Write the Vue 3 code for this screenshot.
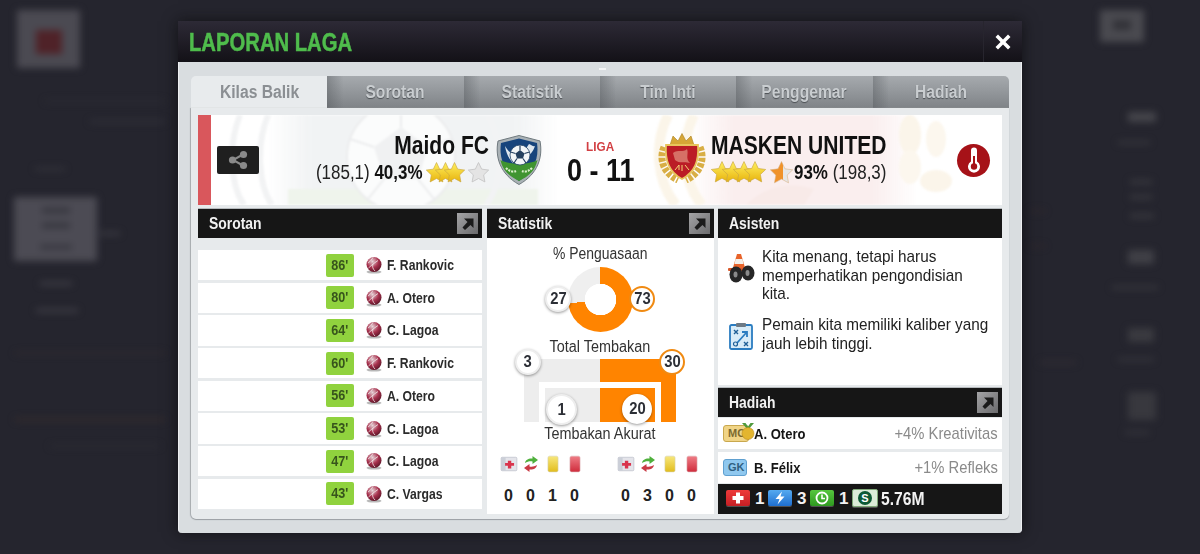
<script setup>
const blobs = [
  { x: 17, y: 10, w: 63, h: 58, c: '#4b4a52' },
  { x: 36, y: 30, w: 26, h: 24, c: '#4f2228' },
  { x: 14, y: 197, w: 83, h: 64, c: '#4c4b54' },
  { x: 42, y: 208, w: 28, h: 5, c: '#34343c' },
  { x: 42, y: 223, w: 28, h: 5, c: '#34343c' },
  { x: 40, y: 245, w: 32, h: 4, c: '#34343c' },
  { x: 40, y: 282, w: 32, h: 3, c: '#44434b' },
  { x: 36, y: 309, w: 42, h: 3, c: '#44434b' },
  { x: 100, y: 232, w: 20, h: 3, c: '#3f3e46' },
  { x: 35, y: 168, w: 30, h: 2, c: '#3c3c44' },
  { x: 45, y: 100, w: 120, h: 2, c: '#2f2f37' },
  { x: 90, y: 120, w: 75, h: 3, c: '#31313a' },
  { x: 15, y: 352, w: 150, h: 2, c: '#342c30' },
  { x: 15, y: 418, w: 150, h: 3, c: '#362c2c' },
  { x: 50, y: 445, w: 110, h: 2, c: '#2e2e36' },
  { x: 1100, y: 10, w: 44, h: 32, c: '#4a4a50' },
  { x: 1113, y: 20, w: 18, h: 10, c: '#323238' },
  { x: 1128, y: 112, w: 28, h: 10, c: '#45454b' },
  { x: 1118, y: 141, w: 32, h: 3, c: '#3a3a40' },
  { x: 1130, y: 180, w: 22, h: 4, c: '#3a3a40' },
  { x: 1130, y: 195, w: 22, h: 4, c: '#3a3a40' },
  { x: 1130, y: 214, w: 24, h: 4, c: '#3a3a40' },
  { x: 1128, y: 250, w: 26, h: 14, c: '#404046' },
  { x: 1112, y: 286, w: 46, h: 3, c: '#3a3a40' },
  { x: 1128, y: 328, w: 26, h: 14, c: '#3a3a40' },
  { x: 1118, y: 358, w: 36, h: 3, c: '#38383e' },
  { x: 1128, y: 392, w: 28, h: 28, c: '#38383e' },
  { x: 1125, y: 431, w: 24, h: 3, c: '#38383e' },
  { x: 1040, y: 361, w: 36, h: 3, c: '#322d34' },
  { x: 1030, y: 210, w: 15, h: 2, c: '#34292d' },
  { x: 1030, y: 245, w: 15, h: 2, c: '#34292d' }
]

const tabs = ['Kilas Balik', 'Sorotan', 'Statistik', 'Tim Inti', 'Penggemar', 'Hadiah']

const goals = [
  { min: 86, name: 'F. Rankovic' },
  { min: 80, name: 'A. Otero' },
  { min: 64, name: 'C. Lagoa' },
  { min: 60, name: 'F. Rankovic' },
  { min: 56, name: 'A. Otero' },
  { min: 53, name: 'C. Lagoa' },
  { min: 47, name: 'C. Lagoa' },
  { min: 43, name: 'C. Vargas' }
]

const discipline = ['#i-med', '#i-sub', '#i-yellow', '#i-red']
const homeCounts = [0, 0, 1, 0]
const awayCounts = [0, 3, 0, 0]
</script>

<template>
  <div class="page">
    <svg class="defs" width="0" height="0">
      <defs>
        <linearGradient id="gold" x1="0" y1="0" x2="0" y2="1">
          <stop offset="0" stop-color="#fff060" />
          <stop offset="1" stop-color="#e8b30c" />
        </linearGradient>
        <linearGradient id="half" x1="0" y1="0" x2="1" y2="0">
          <stop offset="0.55" stop-color="#f0922a" />
          <stop offset="0.55" stop-color="#e6e6e6" />
        </linearGradient>
        <radialGradient id="ballG" cx="0.4" cy="0.3" r="0.8">
          <stop offset="0" stop-color="#e6d4d8" />
          <stop offset="0.5" stop-color="#a8324e" />
          <stop offset="1" stop-color="#4a0e1e" />
        </radialGradient>
        <linearGradient id="redCard" x1="0" y1="0" x2="0" y2="1">
          <stop offset="0" stop-color="#ef7d86" />
          <stop offset="1" stop-color="#cf2c3c" />
        </linearGradient>
        <linearGradient id="yellowCard" x1="0" y1="0" x2="0" y2="1">
          <stop offset="0" stop-color="#f7e77c" />
          <stop offset="1" stop-color="#e2bd1d" />
        </linearGradient>
        <linearGradient id="greyZone" x1="0" y1="0" x2="1" y2="0">
          <stop offset="0" stop-color="#f1f3f4" stop-opacity="0" />
          <stop offset="0.15" stop-color="#f1f3f4" />
          <stop offset="0.85" stop-color="#f1f3f4" />
          <stop offset="1" stop-color="#f1f3f4" stop-opacity="0" />
        </linearGradient>
        <linearGradient id="pinkZone" x1="0" y1="0" x2="1" y2="0">
          <stop offset="0" stop-color="#faeeee" stop-opacity="0" />
          <stop offset="0.2" stop-color="#faeeee" />
          <stop offset="0.8" stop-color="#faeeee" />
          <stop offset="1" stop-color="#faeeee" stop-opacity="0" />
        </linearGradient>
      </defs>
      <symbol id="i-star" viewBox="0 0 20 20">
        <polygon points="10,0.500 13,6.800 19.700,7.700 14.900,12.300 16.100,19 10,15.700 3.900,19 5.100,12.300 0.300,7.700 7,6.800" fill="url(#gold)" stroke="#c9a640" stroke-width="0.6" />
      </symbol>
      <symbol id="i-star-off" viewBox="0 0 20 20">
        <polygon points="10,0.500 13,6.800 19.700,7.700 14.900,12.300 16.100,19 10,15.700 3.900,19 5.100,12.300 0.300,7.700 7,6.800" fill="#e4e4e4" stroke="#c4c4c4" stroke-width="0.8" />
      </symbol>
      <symbol id="i-star-half" viewBox="0 0 20 20">
        <polygon points="10,0.500 13,6.800 19.700,7.700 14.900,12.300 16.100,19 10,15.700 3.900,19 5.100,12.300 0.300,7.700 7,6.800" fill="url(#half)" stroke="#d5b083" stroke-width="0.5" />
      </symbol>
      <symbol id="i-ball" viewBox="0 0 18 18">
        <ellipse cx="9" cy="16" rx="7.500" ry="1.600" fill="#888" opacity="0.6" />
        <circle cx="9" cy="8.500" r="7.500" fill="url(#ballG)" />
        <path d="M3 7 C6 5 7 3 8 1.500 M8 8 L13 4.500 M8 8 C7 11 8 13 10 15 M8 8 L3.500 12" stroke="#f3e8ea" stroke-width="0.8" fill="none" />
      </symbol>
      <symbol id="i-med" viewBox="0 0 16 16">
        <rect x="1" y="2" width="14" height="12" rx="1" fill="#e4e4ea" stroke="#b8bcc6" stroke-width="0.6" />
        <rect x="1" y="2" width="4" height="12" fill="#cbcfd8" />
        <path d="M7 5h3v2h2.500v2.500h-2.500v2.500h-3v-2.500h-2.500v-2.500h2.500z" fill="#d9344d" />
      </symbol>
      <symbol id="i-sub" viewBox="0 0 18 18">
        <path d="M3 8 C3.500 4.500 7 3 10.500 3.500 V1 L16 5 L10.500 9 V6.500 C8 6 5.500 6.500 3 8Z" fill="#4fb03c" />
        <path d="M15 10 C14.500 13.500 11 15 7.500 14.500 V17 L2 13 L7.500 9 V11.500 C10 12 12.500 11.500 15 10Z" fill="#c93a45" />
      </symbol>
      <symbol id="i-yellow" viewBox="0 0 16 16">
        <rect x="3.500" y="1" width="9" height="14" rx="1.500" fill="url(#yellowCard)" stroke="#d5d0b0" stroke-width="0.5" />
      </symbol>
      <symbol id="i-red" viewBox="0 0 16 16">
        <rect x="3.500" y="1" width="9" height="14" rx="1.500" fill="url(#redCard)" stroke="#d9b0b4" stroke-width="0.5" />
      </symbol>
    </svg>

    <div class="backdrop">
      <div
        v-for="(b, i) in blobs"
        :key="i"
        class="blob"
        :style="{ left: b.x + 'px', top: b.y + 'px', width: b.w + 'px', height: b.h + 'px', background: b.c }"
      ></div>
    </div>

    <div class="modal">
      <header class="modal-head">
        <h1 class="title"><span class="cond title-text">LAPORAN LAGA</span></h1>
        <button class="close">
          <svg width="18" height="18" viewBox="0 0 18 18">
            <path d="M4 1.500 L9 6.500 L14 1.500 L16.500 4 L11.500 9 L16.500 14 L14 16.500 L9 11.500 L4 16.500 L1.500 14 L6.500 9 L1.500 4 Z" fill="#fff" />
          </svg>
        </button>
      </header>

      <div class="modal-body">
        <i class="speck"></i>
        <nav class="tabs">
          <div v-for="(t, i) in tabs" :key="t" class="tab" :class="{ active: i === 0 }">
            <span class="cond mid">{{ t }}</span>
          </div>
        </nav>

        <div class="panel">
          <section class="banner">
            <svg class="watermark" width="804" height="90" viewBox="0 0 804 90">
              <rect x="70" y="0" width="290" height="90" fill="url(#greyZone)" />
              <rect x="90" y="74" width="250" height="16" fill="#eff4ec" />
              <circle cx="203" cy="42" r="54" fill="#fbfcfc" stroke="#ecedee" stroke-width="2" />
              <path d="M203 12 L230 32 L220 64 L186 64 L176 32 Z" fill="#f0f1f2" />
              <path d="M203 12 V-12 M230 32 L254 24 M220 64 L236 84 M186 64 L170 84 M176 32 L152 24" stroke="#ecedee" stroke-width="2" />
              <path d="M42 0 C30 30 32 70 46 90 M70 0 C58 30 60 70 74 90 M290 0 C306 30 304 70 288 90" stroke="#f2f3f4" stroke-width="6" fill="none" />
              <rect x="490" y="0" width="230" height="90" fill="url(#pinkZone)" />
              <path d="M470 0 C456 28 458 66 478 90 M496 0 C482 28 484 66 504 90" stroke="#fbf5e9" stroke-width="10" fill="none" />
              <ellipse cx="712" cy="20" rx="11" ry="20" fill="#fbf5ea" />
              <ellipse cx="738" cy="24" rx="10" ry="18" fill="#fcf7ee" />
              <ellipse cx="712" cy="52" rx="11" ry="17" fill="#fcf7ee" />
              <ellipse cx="738" cy="66" rx="16" ry="11" fill="#fbf5ea" />
              <path d="M548 90 C566 72 590 66 616 74 L606 90 Z" fill="#f8eae8" />
            </svg>
            <div class="bar"></div>
            <button class="share">
              <svg width="22" height="20" viewBox="0 0 22 20">
                <path d="M16 4.500 L6 10 L16 15.500" stroke="#8a8a8a" stroke-width="2" fill="none" />
                <circle cx="16.500" cy="4.500" r="3.600" fill="#8a8a8a" />
                <circle cx="5.500" cy="10" r="3.600" fill="#8a8a8a" />
                <circle cx="16.500" cy="15.500" r="3.600" fill="#8a8a8a" />
              </svg>
            </button>

            <div class="team home">
              <div class="team-name"><span class="cond end">Maido FC</span></div>
              <div class="team-meta">
                <span class="cond end"><span class="thin">(185,1)</span> 40,3%</span>
                <span class="stars">
                  <svg v-for="n in 3" :key="n"><use href="#i-star" /></svg>
                  <svg class="last"><use href="#i-star-off" /></svg>
                </span>
              </div>
            </div>

            <svg class="crest" width="48" height="50" viewBox="0 0 48 50">
              <path d="M24 0.500 L45 6 C48 22 43 39 24 49.500 C5 39 0 22 3 6 Z" fill="#aab2b6" stroke="#6f797e" stroke-width="1" />
              <path d="M24 3.500 L42 8 C44 22 40 36 24 46 C8 36 4 22 6 8 Z" fill="#17447c" />
              <path d="M5.400 25 C14 30 34 30 42.500 25 C40 36 34 41 24 46 C14 41 8 36 5.400 25 Z" fill="#3f9430" />
              <path d="M10 11 C14 18 18 20 20 18 L18 28 C14 24 11 18 10 11 Z M34 9 C37 10 38 12 40 11 C38 17 35 20 31 22 L30 15 Z" fill="#dfe7ee" />
              <circle cx="25" cy="20" r="10" fill="#f3f6f8" stroke="#27466a" stroke-width="0.8" />
              <path d="M25 15 L29.500 18.500 L28 23.500 L22 23.500 L20.500 18.500 Z" fill="#25405f" />
              <path d="M25 15 V10.500 M29.500 18.500 L34.500 17 M28 23.500 L31 28 M22 23.500 L19 28 M20.500 18.500 L15.500 17" stroke="#25405f" stroke-width="1.200" />
              <path d="M11 33 C15 37 19 37 21 36 M37 33 C33 37 29 37 27 36" stroke="#d9efc9" stroke-width="2.200" fill="none" stroke-dasharray="2 1" />
            </svg>

            <div class="score">
              <span class="league"><span class="cond mid">LIGA</span></span>
              <span class="goals"><span class="cond mid">0 - 11</span></span>
            </div>

            <svg class="crest away-crest" width="48" height="50" viewBox="0 0 48 50">
              <path d="M6 14 C1 26 5 40 20 47 M42 14 C47 26 43 40 28 47" stroke="#d8ae45" stroke-width="7" fill="none" stroke-dasharray="4 1.500" />
              <path d="M12 12 L15 3 L20 8 L24 0.500 L28 8 L33 3 L36 12 Z" fill="#d6a636" stroke="#a97f20" stroke-width="0.6" />
              <path d="M8 12 L40 12 C41 28 37 39 24 46 C11 39 7 28 8 12 Z" fill="#bb1c26" stroke="#e8c45c" stroke-width="1.800" />
              <path d="M15 20 C20 16 25 20 29 16 C31 21 27 25 32 30 C26 28 22 31 17 27 Z" fill="#df8c7c" opacity="0.75" />
              <path d="M17 37 L21 32 L21 37 M24 32 L24 38 M27 32 L31 37" stroke="#f3d576" stroke-width="1" fill="none" />
            </svg>

            <div class="team away">
              <div class="team-name"><span class="cond">MASKEN UNITED</span></div>
              <div class="team-meta">
                <span class="stars">
                  <svg v-for="n in 4" :key="n"><use href="#i-star" /></svg>
                  <svg class="last half"><use href="#i-star-half" /></svg>
                </span>
                <span class="cond">93% <span class="thin">(198,3)</span></span>
              </div>
            </div>

            <div class="thermo">
              <svg width="16" height="26" viewBox="0 0 16 26">
                <path d="M5 3.500 a3 3 0 0 1 6 0 V14.500 a6 6 0 1 1 -6 0 Z" fill="#fff" />
                <circle cx="8" cy="19.500" r="3.200" fill="#a61218" />
                <rect x="7" y="9" width="2" height="9" fill="#a61218" />
              </svg>
            </div>
          </section>

          <div class="columns">
            <section class="col highlights">
              <header class="sec-head">
                <span class="cond">Sorotan</span>
                <span class="expand">
                  <svg width="14" height="14" viewBox="0 0 14 14"><path d="M3 1.500 H12.500 V11 L9.500 8 L4 13 L1.500 10.500 L6.500 5 Z" fill="#1b1b1b" /></svg>
                </span>
              </header>
              <div class="goal-list">
                <div v-for="g in goals" :key="g.min" class="goal">
                  <span class="minute"><span class="cond mid">{{ g.min }}'</span></span>
                  <svg class="ball" width="18" height="18"><use href="#i-ball" /></svg>
                  <span class="scorer"><span class="cond">{{ g.name }}</span></span>
                </div>
              </div>
            </section>

            <section class="col stats">
              <header class="sec-head">
                <span class="cond">Statistik</span>
                <span class="expand">
                  <svg width="14" height="14" viewBox="0 0 14 14"><path d="M3 1.500 H12.500 V11 L9.500 8 L4 13 L1.500 10.500 L6.500 5 Z" fill="#1b1b1b" /></svg>
                </span>
              </header>
              <div class="stat-body">
                <div class="stat-label first"><span class="cond mid">% Penguasaan</span></div>
                <div class="donut-wrap">
                  <div class="donut"></div>
                  <span class="num grey n27"><span class="cond mid">27</span></span>
                  <span class="num orange n73"><span class="cond mid">73</span></span>
                </div>
                <div class="stat-label second"><span class="cond mid">Total Tembakan</span></div>
                <div class="shots">
                  <div class="shots-inner"><div class="shots-acc"></div></div>
                  <span class="num grey n3"><span class="cond mid">3</span></span>
                  <span class="num orange n30"><span class="cond mid">30</span></span>
                  <span class="num grey big n1"><span class="cond mid">1</span></span>
                  <span class="num white n20"><span class="cond mid">20</span></span>
                </div>
                <div class="stat-label third"><span class="cond mid">Tembakan Akurat</span></div>
                <div class="discipline">
                  <div class="disc-side">
                    <div v-for="(d, i) in discipline" :key="d" class="disc-cell">
                      <svg width="18" height="18"><use :href="d" /></svg>
                      <b>{{ homeCounts[i] }}</b>
                    </div>
                  </div>
                  <div class="disc-side">
                    <div v-for="(d, i) in discipline" :key="d" class="disc-cell">
                      <svg width="18" height="18"><use :href="d" /></svg>
                      <b>{{ awayCounts[i] }}</b>
                    </div>
                  </div>
                </div>
              </div>
            </section>

            <section class="col side">
              <header class="sec-head"><span class="cond">Asisten</span></header>
              <div class="advice">
                <div class="tip">
                  <svg width="28" height="30" viewBox="0 0 28 30">
                    <path d="M10 1 L14 1 L19 18 L5 18 Z" fill="#e8632a" />
                    <path d="M8.500 6 L15.500 6 L16.500 11 L7.500 11 Z" fill="#f3f0ea" />
                    <rect x="1" y="15" width="20" height="3" rx="1" fill="#d9592a" />
                    <ellipse cx="9" cy="21.500" rx="6.500" ry="8" fill="#262626" />
                    <ellipse cx="21" cy="20" rx="6.500" ry="7.500" fill="#262626" />
                    <ellipse cx="8.500" cy="21.500" rx="2" ry="3" fill="#8a8a8a" />
                    <ellipse cx="20.500" cy="20" rx="2" ry="3" fill="#8a8a8a" />
                  </svg>
                  <p><span class="cond">Kita menang, tetapi harus<br>memperhatikan pengondisian<br>kita.</span></p>
                </div>
                <div class="tip">
                  <svg width="24" height="28" viewBox="0 0 24 28">
                    <rect x="1" y="3" width="22" height="24" rx="1.500" fill="#d8ecf8" stroke="#2a7cc0" stroke-width="1.800" />
                    <rect x="7" y="1" width="10" height="4" rx="1" fill="#6d7a85" />
                    <path d="M5 8 L9 12 M9 8 L5 12 M15 20 L19 24 M19 20 L15 24" stroke="#1f5f96" stroke-width="1.400" />
                    <path d="M8 21 L17 11 M13 10 H18 V15" stroke="#2a7cc0" stroke-width="1.800" fill="none" />
                    <circle cx="6.500" cy="22" r="2" fill="none" stroke="#1f5f96" stroke-width="1.200" />
                  </svg>
                  <p><span class="cond">Pemain kita memiliki kaliber yang<br>jauh lebih tinggi.</span></p>
                </div>
              </div>

              <header class="sec-head rewards-head">
                <span class="cond">Hadiah</span>
                <span class="expand">
                  <svg width="14" height="14" viewBox="0 0 14 14"><path d="M3 1.500 H12.500 V11 L9.500 8 L4 13 L1.500 10.500 L6.500 5 Z" fill="#1b1b1b" /></svg>
                </span>
              </header>
              <div class="reward">
                <span class="pos mc">MC
                  <svg class="medal" width="14" height="17" viewBox="0 0 14 17">
                    <path d="M1 0 L7 7 L13 0 L9.500 0 L7 3.500 L4.500 0 Z" fill="#4f9a3c" />
                    <circle cx="7" cy="10.500" r="6" fill="#e3b52f" stroke="#b98c1c" stroke-width="0.6" />
                  </svg>
                </span>
                <span class="who"><span class="cond">A. Otero</span></span>
                <span class="bonus"><span class="cond end">+4% Kreativitas</span></span>
              </div>
              <div class="reward">
                <span class="pos gk">GK</span>
                <span class="who"><span class="cond">B. Félix</span></span>
                <span class="bonus"><span class="cond end">+1% Refleks</span></span>
              </div>
              <div class="loot">
                <span class="tile red">
                  <svg width="14" height="14" viewBox="0 0 14 14"><path d="M5 1.500 H9 V5 H12.500 V9 H9 V12.500 H5 V9 H1.500 V5 H5 Z" fill="#fff" /></svg>
                </span>
                <b>1</b>
                <span class="tile blue">
                  <svg width="14" height="14" viewBox="0 0 14 14"><path d="M9 0.500 L2.500 8 H6.500 L4.500 13.500 L11.500 5.500 H7.500 Z" fill="#fff" /></svg>
                </span>
                <b>3</b>
                <span class="tile green">
                  <svg width="14" height="14" viewBox="0 0 14 14"><circle cx="7" cy="7" r="5.500" fill="none" stroke="#fff" stroke-width="1.800" /><path d="M7 3.500 V7.500 H10" stroke="#fff" stroke-width="1.600" fill="none" /></svg>
                </span>
                <b>1</b>
                <span class="tile cash">
                  <svg width="16" height="16" viewBox="0 0 16 16"><circle cx="8" cy="8" r="7" fill="#0d5a35" /><text x="8" y="12" text-anchor="middle" font-size="11" font-weight="700" font-family="Liberation Sans, sans-serif" fill="#fff">S</text></svg>
                </span>
                <b class="money"><span class="cond">5.76M</span></b>
              </div>
            </section>
          </div>
        </div>
      </div>
    </div>
  </div>
</template>

<style>
html,
body {
  margin: 0;
  background: #24242c;
}
</style>

<style scoped>
.page {
  position: relative;
  width: 1200px;
  height: 554px;
  overflow: hidden;
  display: flex;
  justify-content: center;
  padding-top: 21px;
  box-sizing: border-box;
  font-family: "Liberation Sans", Arial, sans-serif;
  color: #111;
  background: #25252e;
}

.defs {
  position: absolute;
}

.backdrop {
  position: absolute;
  inset: 0;
  filter: blur(3.500px);
}

.blob {
  position: absolute;
}

/* narrow helvetica look */
.cond {
  display: inline-block;
  white-space: nowrap;
  transform: scaleX(0.87);
  transform-origin: left center;
}

.cond.end {
  transform-origin: right center;
}

.cond.mid {
  transform-origin: center center;
}

.modal {
  position: relative;
  width: 844px;
  height: 511px;
  display: flex;
  flex-direction: column;
  box-shadow: 0 0 14px rgba(10, 10, 12, 0.7);
}

.modal-head {
  height: 41px;
  flex: none;
  display: flex;
  justify-content: space-between;
  background: linear-gradient(#2d2a36, #131117);
}

.title {
  margin: 0;
  padding: 1px 0 0 11px;
  font-size: 25px;
  line-height: 41px;
  font-weight: 700;
  color: #4fbc4c;
}

.title-text {
  transform: scaleX(0.81);
  -webkit-text-stroke: 0.5px #4fbc4c;
}

.close {
  width: 39px;
  padding: 0;
  border: 0;
  border-left: 1px solid #27252e;
  background: transparent;
  display: flex;
  align-items: center;
  justify-content: center;
}

.modal-body {
  position: relative;
  flex: 1;
  padding: 14px 12px;
  background: #d9dde0;
  border-left: 1px solid #eef0f2;
  border-right: 1px solid #eef0f2;
  border-radius: 0 0 4px 4px;
  box-sizing: border-box;
  display: flex;
  flex-direction: column;
}

.speck {
  position: absolute;
  left: 420px;
  top: 6px;
  width: 7px;
  height: 2px;
  background: #f4f5f6;
}

.tabs {
  display: grid;
  grid-template-columns: repeat(6, 1fr);
  height: 32px;
  flex: none;
}

.tab {
  display: flex;
  align-items: center;
  justify-content: center;
  font-size: 18px;
  font-weight: 700;
  color: #c9cdd0;
  text-shadow: 0 1px 1px #4c5054;
  background: linear-gradient(90deg, rgba(70, 74, 78, 0.35), rgba(70, 74, 78, 0) 12%), linear-gradient(#a6aaae, #7f8387);
}

.tab:first-child {
  border-radius: 5px 0 0 0;
}

.tab:last-child {
  border-radius: 0 5px 0 0;
}

.tab.active {
  color: #8b8f93;
  text-shadow: none;
  background: #e8ebed;
}

.panel {
  flex: 1;
  padding: 7px 7px 5px;
  background: #e7eaec;
  border-radius: 0 0 5px 5px;
  box-shadow: 0 1px 1px #9a9ea2, -1px 0 1px #a8acb0;
  display: flex;
  flex-direction: column;
  gap: 4px;
}

.banner {
  position: relative;
  height: 90px;
  flex: none;
  display: flex;
  align-items: center;
  background: #fff;
  overflow: hidden;
}

.watermark {
  position: absolute;
  left: 0;
  top: 0;
  filter: blur(1px);
}

.bar {
  position: relative;
  width: 13px;
  align-self: stretch;
  background: #d9575c;
}

.share {
  position: relative;
  width: 42px;
  height: 28px;
  margin-left: 6px;
  padding: 0;
  border: 0;
  border-radius: 2px;
  background: #1f1f1f;
  display: flex;
  align-items: center;
  justify-content: center;
}

.team {
  position: relative;
  display: flex;
  flex-direction: column;
  margin-bottom: 4px;
}

.team.home {
  width: 230px;
  margin-right: 6px;
  align-items: flex-end;
}

.team.away {
  width: 246px;
  margin-left: 5px;
}

.team-name {
  font-size: 26px;
  font-weight: 700;
  line-height: 28px;
}

.team-name .cond {
  transform: scaleX(0.81);
}

.team-meta {
  display: flex;
  align-items: center;
  font-size: 19.500px;
  font-weight: 700;
  line-height: 26px;
}

.thin {
  font-weight: 400;
  color: #222;
}

.stars {
  display: inline-flex;
  align-items: center;
}

.stars svg {
  width: 21px;
  height: 21px;
  margin-right: -12px;
}

.stars svg.last {
  margin-right: 0;
  margin-left: 15px;
}

.home .stars {
  margin-left: 3px;
  margin-right: 0;
}

.away .stars svg {
  width: 22px;
  height: 22px;
  margin-right: -11px;
}

.away .stars svg.half {
  width: 23px;
  height: 23px;
  margin-right: 0;
  margin-left: 15px;
}

.away .stars {
  margin-right: 1px;
}

.crest {
  position: relative;
  flex: none;
}

.away-crest {
  margin-bottom: 4px;
}

.score {
  position: relative;
  width: 115px;
  display: flex;
  flex-direction: column;
  align-items: center;
}

.league {
  font-size: 13.500px;
  font-weight: 700;
  line-height: 22px;
  color: #d23f43;
}

.goals {
  font-size: 31px;
  font-weight: 700;
  line-height: 26px;
}

.thermo {
  position: relative;
  width: 33px;
  height: 33px;
  border-radius: 50%;
  background: #a61218;
  display: flex;
  align-items: center;
  justify-content: center;
}

.columns {
  flex: 1;
  display: grid;
  grid-template-columns: 284px 228px 284px;
  column-gap: 4px;
  min-height: 0;
}

.col {
  display: flex;
  flex-direction: column;
  min-width: 0;
}

.stats {
  margin-left: 1px;
  background: #fff;
}

.sec-head {
  height: 29px;
  flex: none;
  display: flex;
  align-items: center;
  justify-content: space-between;
  padding: 0 4px 0 11px;
  background: #161616;
  color: #f2f2f2;
  font-size: 16px;
  font-weight: 700;
  box-shadow: 0 -1px 0 #b6babd;
}

.expand {
  width: 21px;
  height: 21px;
  background: linear-gradient(135deg, #a4a4a6, #6b6b6d);
  display: flex;
  align-items: center;
  justify-content: center;
}

.goal-list {
  flex: 1;
  display: grid;
  grid-template-rows: repeat(8, 1fr);
  row-gap: 2.500px;
  padding: 12px 0 5px;
}

.goal {
  display: flex;
  align-items: center;
  padding-left: 128px;
  background: #fff;
}

.minute {
  width: 28px;
  height: 23px;
  border-radius: 2px;
  background: #90d23e;
  color: #37541c;
  font-size: 14.500px;
  font-weight: 700;
  line-height: 23px;
  text-align: center;
}

.ball {
  margin-left: 11px;
}

.scorer {
  margin-left: 4px;
  font-size: 14px;
  font-weight: 700;
  color: #2b2b2b;
}

.stat-body {
  position: relative;
  flex: 1;
  display: flex;
  flex-direction: column;
  align-items: center;
  padding-right: 1px;
}

.stat-label {
  font-size: 16px;
  line-height: 18px;
  color: #333;
  text-align: center;
}

.stat-label.second .cond,
.stat-label.third .cond {
  transform: scaleX(0.9);
}

.stat-label.first {
  margin-top: 7px;
}

.donut-wrap {
  position: relative;
  width: 114px;
  height: 66px;
  margin-top: 4px;
  display: flex;
  justify-content: center;
}

.donut {
  width: 65px;
  height: 65px;
  border-radius: 50%;
  background: radial-gradient(circle, #fff 15.500px, transparent 16px), conic-gradient(#ff8400 0 73%, #efefef 73% 100%);
}

.num {
  position: absolute;
  box-sizing: border-box;
  width: 26px;
  height: 26px;
  border-radius: 50%;
  background: #fff;
  border: 2px solid #eee;
  box-shadow: 0 1px 3px rgba(0, 0, 0, 0.4);
  display: flex;
  align-items: center;
  justify-content: center;
  font-size: 17px;
  font-weight: 700;
  color: #2c2f36;
}

.num.orange {
  border-color: #f08a12;
  box-shadow: none;
}

.num.white {
  border-color: #fff;
}

.n27 {
  left: 2px;
  top: 19px;
}

.n73 {
  left: 86px;
  top: 19px;
}

.stat-label.second {
  margin-top: 5px;
}

.shots {
  position: relative;
  box-sizing: border-box;
  width: 152px;
  height: 63px;
  margin-top: 3px;
  padding: 23px 15px 0;
  background: linear-gradient(90deg, #ededed 50%, #ff8400 50%);
}

.shots-inner {
  box-sizing: border-box;
  height: 40px;
  padding: 6px 6px 0;
  background: #fff;
}

.shots-acc {
  height: 34px;
  background: linear-gradient(90deg, #ededed 50%, #ff8400 50%);
}

.n3 {
  left: -9px;
  top: -10px;
}

.n30 {
  left: 135px;
  top: -10px;
}

.num.big {
  width: 31px;
  height: 31px;
}

.n1 {
  left: 22px;
  top: 35px;
}

.n20 {
  left: 98px;
  top: 35px;
  width: 30px;
  height: 30px;
}

.stat-label.third {
  margin-top: 3px;
}

.discipline {
  display: flex;
  gap: 29px;
  margin-top: 12px;
}

.disc-side {
  display: flex;
  gap: 0;
}

.disc-cell {
  width: 22px;
  display: flex;
  flex-direction: column;
  align-items: center;
  gap: 14px;
}

.disc-cell b {
  font-size: 16px;
  line-height: 18px;
  color: #222;
}

.advice {
  height: 147px;
  flex: none;
  box-sizing: border-box;
  padding: 10px 8px 0 9px;
  background: #fff;
  display: flex;
  flex-direction: column;
  gap: 12.500px;
}

.tip {
  display: flex;
  align-items: flex-start;
  gap: 7px;
}

.tip svg {
  flex: none;
  margin-top: 5px;
}

.tip:last-child svg {
  margin: 6px 2px 0;
}

.tip p {
  margin: 0;
  font-size: 17px;
  line-height: 18.500px;
  color: #222;
}

.tip p .cond {
  transform: scaleX(0.9);
}

.rewards-head {
  margin-top: 3px;
  padding-left: 11px;
}

.reward {
  height: 31px;
  flex: none;
  display: flex;
  align-items: center;
  padding: 0 4px 0 5px;
  background: #fff;
  margin-top: 1px;
}

.reward + .reward {
  margin-top: 3px;
}

.pos {
  position: relative;
  box-sizing: border-box;
  width: 24px;
  height: 17px;
  border-radius: 3px;
  font-size: 11px;
  font-weight: 700;
  line-height: 15px;
  padding-left: 4px;
  flex: none;
}

.pos.mc {
  width: 26px;
  background: #f0d486;
  border: 1px solid #c9a84e;
  color: #7c6a30;
}

.pos.gk {
  background: #8fc8ef;
  border: 1px solid #5fa0d0;
  color: #2f5f80;
}

.medal {
  position: absolute;
  left: 17px;
  top: -3px;
}

.who {
  margin-left: 7px;
  font-size: 15px;
  font-weight: 700;
  color: #151515;
  flex: none;
}

.pos.mc + .who {
  margin-left: 5px;
}

.bonus {
  flex: 1;
  text-align: right;
  font-size: 17px;
  color: #8a8a8a;
}

.loot {
  height: 30px;
  flex: none;
  margin-top: 1px;
  box-sizing: border-box;
  padding: 0 4px 0 8px;
  background: #161616;
  display: flex;
  align-items: center;
  color: #f2f2f2;
  font-size: 17px;
}

.loot b {
  margin: 0 3.500px 0 5px;
}

.loot b.money {
  margin: 0 0 0 3px;
  font-size: 18px;
}

.tile {
  width: 24px;
  height: 16px;
  margin-top: -2px;
  border-radius: 2px;
  display: flex;
  align-items: center;
  justify-content: center;
  box-shadow: 0 1px 0 rgba(120, 120, 120, 0.6);
}

.tile.red {
  background: linear-gradient(#ee3a3a, #c61f24);
}

.tile.blue {
  background: linear-gradient(#55aaf0, #1f6fd0);
}

.tile.green {
  background: linear-gradient(#56c63e, #2f9a20);
}

.tile.cash {
  width: 26px;
  height: 18px;
  background: #dcecd8;
  border: 1px solid #7fa878;
  box-sizing: border-box;
}
</style>
